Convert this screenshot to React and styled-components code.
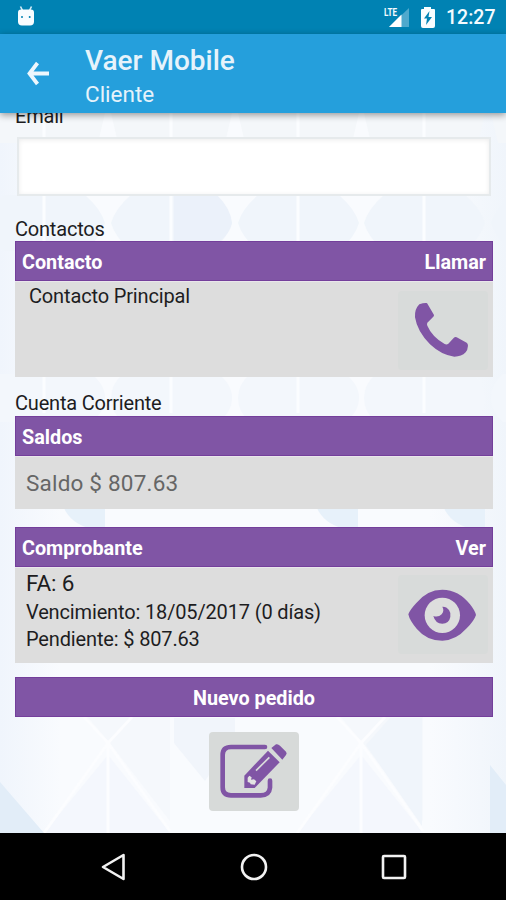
import styled, { createGlobalStyle } from 'styled-components';

const purple = '#8055a5';

const GlobalStyle = createGlobalStyle`
  * {
    box-sizing: border-box;
  }

  body {
    margin: 0;
    font-family: Roboto, 'Liberation Sans', sans-serif;
    color: #1d1d1f;
  }
`;

const Screen = styled.div`
  display: flex;
  flex-direction: column;
  width: 506px;
  height: 900px;
  overflow: hidden;
`;

const StatusBar = styled.div`
  display: flex;
  align-items: center;
  flex: 0 0 34px;
  padding: 0 11px 0 17px;
  background: #0082b3;
  color: #f4fbff;
`;

const StatusIcons = styled.div`
  display: flex;
  align-items: center;
  gap: 10px;
  margin-left: auto;
`;

const Clock = styled.span`
  width: 49px;
  padding-top: 2px;
  font-size: 19.5px;
  font-weight: 500;
  line-height: 32px;
  white-space: nowrap;
`;

const AppBar = styled.header`
  display: flex;
  flex: 0 0 79px;
  padding-left: 26px;
  background: #259fdc;
  color: #e6f3fb;
  box-shadow: 0 2px 7px rgba(0, 0, 0, 0.4);
  z-index: 1;
`;

const BackButton = styled.div`
  width: 59px;
  padding-top: 26px;
`;

const Title = styled.h1`
  margin: 10px 0 0;
  font-size: 28px;
  line-height: 33px;
  font-weight: 500;
`;

const Subtitle = styled.div`
  font-size: 22.5px;
  line-height: 34px;
`;

const Content = styled.main`
  position: relative;
  flex: 1;
  overflow: hidden;
  padding: 0 13px 0 15px;
  background: #f7fafd;
`;

const Backdrop = styled.svg`
  position: absolute;
  top: 0;
  left: 0;
`;

const Form = styled.div`
  position: relative;
  display: flex;
  flex-direction: column;
`;

const Label = styled.div`
  height: ${({ $height }) => $height}px;
  margin-top: ${({ $top = 0 }) => $top}px;
  font-size: 20px;
  line-height: 24px;
  letter-spacing: -0.2px;
`;

const EmailInput = styled.input`
  width: 474px;
  height: 59px;
  margin: 0 2px;
  border: 2px solid #e6eaec;
  background: #fff;
  box-shadow: inset 0 1px 5px rgba(0, 0, 0, 0.08);
  outline: none;
`;

const Bar = styled.div`
  display: flex;
  align-items: center;
  justify-content: ${({ $center }) => ($center ? 'center' : 'space-between')};
  height: 40px;
  padding: 2px 6px 0;
  border: 1px solid #743f9b;
  background: ${purple};
  color: #fff;
  font-size: 19.8px;
  font-weight: 700;
`;

const Panel = styled.div`
  display: flex;
  justify-content: space-between;
  height: ${({ $height }) => $height}px;
  margin-bottom: ${({ $gap = 0 }) => $gap}px;
  padding: ${({ $pad }) => $pad};
  border-top: 1px solid #e9e6eb;
  background: #ddd;
`;

const Line = styled.div`
  font-size: ${({ $size = 20 }) => $size}px;
  line-height: ${({ $height = 27 }) => $height}px;
  color: ${({ $muted }) => ($muted ? '#666' : 'inherit')};
  letter-spacing: ${({ $spacing = -0.15 }) => $spacing}px;
  white-space: nowrap;
`;

const IconButton = styled.button`
  display: block;
  width: 90px;
  height: 79px;
  padding: 0;
  border: 0;
  border-radius: 4px;
  background: ${({ $bg = '#d8dbda' }) => $bg};
  color: ${purple};
  align-self: ${({ $center }) => ($center ? 'center' : 'auto')};
  margin: ${({ $margin }) => $margin};

  svg {
    display: block;
  }
`;

const NavBar = styled.nav`
  display: flex;
  flex: 0 0 67px;
  align-items: center;
  justify-content: space-between;
  padding: 0 98px 0 99px;
  background: #000;
`;

const columns = [-19, 108, 235, 361, 488];

const Pattern = () => (
  <Backdrop width="506" height="720" viewBox="0 113 506 720">
    <defs>
      <linearGradient id="page" x1="0" x2="1">
        <stop offset="0" stopColor="#f0f5fc" />
        <stop offset="0.12" stopColor="#f9fbfe" />
        <stop offset="0.85" stopColor="#f9fbfe" />
        <stop offset="1" stopColor="#f0f5fb" />
      </linearGradient>
    </defs>
    <rect y="113" width="506" height="720" fill="url(#page)" />
    {columns.map((x) => (
      <g key={x}>
        <path d={`M${x + 3} 223q4-14 20-28h81q16 14 20 28q-4 14-20 28h-81q-16-14-20-28`} fill="#f0f5fb" />
        <path d={`M${x + 3} 113h121l-7 30h-107z`} fill="#f4f7fa" />
        <path d={`M${x + 3} 398q0-14 12-24h95q14 10 14 24t-14 24h-95q-12-10-12-24`} fill="#f3f7fc" />
        <path d={`M${x + 63} 113v300`} stroke="#fbfdff" strokeWidth="3" />
      </g>
    ))}
    {[63, 316, 443].map((x) => (
      <path key={x} d={`M${x} 506h42v22h-16q-19-5-26-22`} fill="#e7f1fa" />
    ))}
    {[-18, 235, 488].map((x) => (
      <g key={x}>
        <path d={`M${x + 62} 833l64-78l62 78z`} fill="#f4f7fd" />
        <path d={`M${x + 128} 743l-24-28h84v106z`} fill="#f5f8fc" />
        <path d={`M${x + 126} 743l62 88M${x + 126} 743l-64 90M${x + 126} 743l-24-26M${x + 126} 743l24-26M${x + 126} 743v90`} stroke="#fcfdff" strokeWidth="3" fill="none" />
      </g>
    ))}
    <path d="M174 718h61v18l-30 45l-31-38z" fill="#f1f5fb" />
    <path d="M366 745l24-27h32v108z" fill="#f0f5fb" />
    <path d="M174 195h43q14 14 15 28q-2 10-12 18h-46z" fill="#ebf1fa" />
    <path d="M0 782l44 51H0zM490 765l16 20v48h-16z" fill="#e2edf8" />
  </Backdrop>
);

const AndroidHead = () => (
  <svg width="18" height="22" viewBox="0 0 18 22">
    <path d="M3.5 .5l2 4M14.5 .5l-2 4" stroke="#d6edf7" strokeWidth="1.6" />
    <path d="M1 6.5q0-3 3-3h10q3 0 3 3v9q0 4-4 4H5q-4 0-4-4z" fill="#f7fcff" />
    <circle cx="5" cy="11" r="1" fill="#0082b3" />
    <circle cx="12.7" cy="11" r="1" fill="#0082b3" />
  </svg>
);

const Signal = () => (
  <svg width="26" height="34" viewBox="0 0 26 34">
    <text x="0" y="16" fontSize="11.5" fontWeight="700" fill="#f4fbff" textLength="13" lengthAdjust="spacingAndGlyphs">LTE</text>
    <path d="M25 8v19H5z" fill="#4fa9cd" />
    <path d="M17.5 14.5V27H5z" fill="#fff" />
  </svg>
);

const Battery = () => (
  <svg width="16" height="34" viewBox="0 0 16 34">
    <path d="M4 9V7h7v2h3q1 0 1 1v16q0 2-2 2H3q-2 0-2-2V10q0-1 1-1z" fill="#f8fdff" />
    <path d="M9.5 11L4 18.5h3L6 25l6-8H8.5z" fill="#0082b3" />
  </svg>
);

// the three action icons share one 270x237 drawing area
const PhoneIcon = () => (
  <svg width="90" height="79" viewBox="55 32 270 237" fill="currentColor">
    <path d="M119 72Q132 67 141 68Q144 70 145 73L163 104Q163 107 161 109L143 127Q141 132 143 136Q157 169 195 191Q201 194 206 190L222 173Q226 169 231 171L261 187Q265 190 265 196Q264 209 258 216Q246 229 224 229Q186 225 151 192Q113 154 106 111Q104 87 119 72Z" />
  </svg>
);

const EyeIcon = () => (
  <svg width="90" height="79" viewBox="54 44 270 237">
    <path d="M85 162Q90 148 109 128Q141 88 187 88Q237 89 270 132Q285 151 288 164Q282 182 260 204Q227 241 187 241Q140 241 110 205Q89 181 85 162Z" fill="currentColor" />
    <circle cx="187" cy="165" r="53" fill="#dddedd" />
    <path d="M187 139Q199 138 207 149Q214 159 211 170Q207 190 187 190Q166 190 160 167Q175 172 185 162Q194 151 187 139Z" fill="currentColor" />
  </svg>
);

const EditIcon = () => (
  <svg width="90" height="79" viewBox="57 35 270 237" fill="currentColor">
    <path d="M225 80H123Q98 80 98 104V201Q98 225 123 225H212Q238 225 240 202V181" fill="none" stroke="currentColor" strokeWidth="14" strokeLinecap="round" />
    <path d="M234 85L275 126L194 208H158V162Z" fill="#d7dad9" />
    <path d="M234 91L269 126L194 203H163V166Z" />
    <path d="M244 83L258 72Q264 70 270 76L288 94Q292 99 288 104L277 118Z" />
    <path d="M238 111L198 151" stroke="#d9dcdb" strokeWidth="5" />
    <path d="M178 166L185 171L183 178L192 177L199 183L194 193L182 192L180 187L173 185V172Z" fill="#e3e4e3" />
  </svg>
);

const App = () => (
  <>
    <GlobalStyle />
    <Screen>
      <StatusBar>
        <AndroidHead />
        <StatusIcons>
          <Signal />
          <Battery />
          <Clock>12:27</Clock>
        </StatusIcons>
      </StatusBar>
      <AppBar>
        <BackButton>
          <svg width="24" height="27" viewBox="0 0 24 27" fill="none" stroke="#edf7fd" strokeWidth="3.8">
            <path d="M11.5 3L3.5 13.5l8 10.5M3 13.5h20" />
          </svg>
        </BackButton>
        <div>
          <Title>Vaer Mobile</Title>
          <Subtitle>Cliente</Subtitle>
        </div>
      </AppBar>
      <Content>
        <Pattern />
        <Form>
          <Label $height={33} $top={-9}>Email</Label>
          <EmailInput />
          <Label $height={24} $top={21}>Contactos</Label>
          <Bar>
            <span>Contacto</span>
            <span>Llamar</span>
          </Bar>
          <Panel $height={96} $gap={14} $pad="1px 5px 0 14px">
            <Line>Contacto Principal</Line>
            <IconButton $margin="8px 0 0">
              <PhoneIcon />
            </IconButton>
          </Panel>
          <Label $height={25}>Cuenta Corriente</Label>
          <Bar>
            <span>Saldos</span>
          </Bar>
          <Panel $height={53} $gap={18} $pad="13px 11px 0">
            <Line $size={22.5} $muted $spacing={0.2}>Saldo $ 807.63</Line>
          </Panel>
          <Bar>
            <span>Comprobante</span>
            <span>Ver</span>
          </Bar>
          <Panel $height={96} $gap={14} $pad="2px 5px 0 11px">
            <div>
              <Line $size={22.5}>FA: 6</Line>
              <Line $height={31}>Vencimiento: 18/05/2017 (0 días)</Line>
              <Line $height={22}>Pendiente: $ 807.63</Line>
            </div>
            <IconButton $margin="5px 0 0">
              <EyeIcon />
            </IconButton>
          </Panel>
          <Bar $center>
            <span>Nuevo pedido</span>
          </Bar>
          <IconButton $center $bg="#d7dad9" $margin="15px 0 0">
            <EditIcon />
          </IconButton>
        </Form>
      </Content>
      <NavBar>
        <svg width="28" height="30" viewBox="0 0 28 30" fill="none" stroke="#f2f2f2" strokeWidth="2.6">
          <path d="M24.5 3v24L4 15z" strokeLinejoin="round" />
        </svg>
        <svg width="30" height="30" viewBox="0 0 30 30" fill="none" stroke="#f2f2f2" strokeWidth="2.6">
          <circle cx="15" cy="15" r="12" />
        </svg>
        <svg width="28" height="28" viewBox="0 0 28 28" fill="none" stroke="#f2f2f2" strokeWidth="2.6">
          <rect x="3" y="3" width="22" height="22" rx="1" />
        </svg>
      </NavBar>
    </Screen>
  </>
);

export default App;
